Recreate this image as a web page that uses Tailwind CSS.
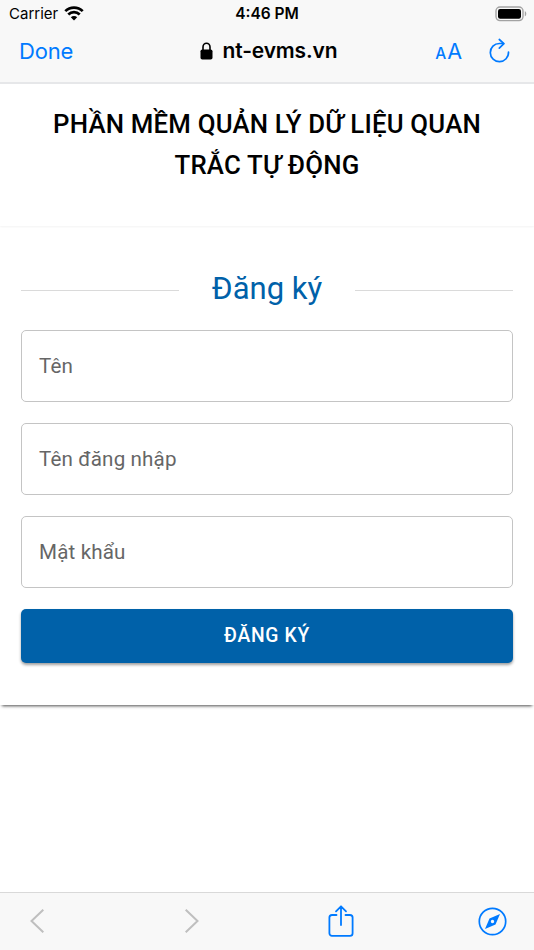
<!DOCTYPE html>
<html lang="vi">
<head>
<meta charset="utf-8">
<title>nt-evms.vn</title>
<script src="https://cdn.jsdelivr.net/npm/@tailwindcss/browser@4"></script>
</head>
<body class="bg-white">
<div class="w-[534px] h-[950px] flex flex-col overflow-hidden bg-white font-['Roboto',sans-serif] text-black">
  <header class="h-[84px] shrink-0 bg-[#f8f8f8] border-b-2 border-[#e6e7e9] font-['Inter',sans-serif]">
    <div class="h-[27px] grid grid-cols-3 items-center pl-[9px] pr-[7px]">
      <div class="flex items-center gap-[6px]">
        <span class="text-[15px] leading-[27px]">Carrier</span>
        <svg class="w-[20px] h-[15px] -mt-[1px]" viewBox="0 0 20 15" fill="none" stroke="#000" stroke-width="2.7">
          <path d="M1.3 5.1a12.4 12.4 0 0 1 17.4 0"/><path d="M4.3 8.5a8 8 0 0 1 11.4 0"/>
          <path d="M10 14.4L6.8 11.3a4.5 4.5 0 0 1 6.4 0z" fill="#000" stroke="none"/>
        </svg>
      </div>
      <span class="text-center text-[15.5px] leading-[27px] font-semibold whitespace-nowrap pr-[2px]">4:46 PM</span>
      <svg class="w-[32px] h-[16px] justify-self-end" viewBox="0 0 32 16">
        <rect x="1" y="1" width="27" height="13.6" rx="4" fill="none" stroke="#a3a3a3" stroke-width="1.4"/>
        <rect x="3" y="3" width="23" height="9.8" rx="2.2"/>
        <path d="M29.8 5.3c2 .6 2 4.4 0 5z" fill="#a3a3a3"/>
      </svg>
    </div>
    <div class="h-[48px] grid grid-cols-[1fr_auto_1fr] items-center pl-[19px] pr-[24px]">
      <span class="text-[22px] text-[#007aff] tracking-[-0.2px]">Done</span>
      <div class="flex items-center gap-[10px] pl-[8px]">
        <svg class="w-[13px] h-[18px]" viewBox="0 0 13 18"><rect x="0.5" y="7.5" width="12" height="10" rx="1.8"/><path d="M3 8V5a3.5 3.8 0 0 1 7 0v3" fill="none" stroke="#000" stroke-width="1.6"/></svg>
        <span class="text-[21px] font-semibold tracking-[-0.15px]">nt-evms.vn</span>
      </div>
      <div class="flex justify-end items-center gap-[27px] text-[#007aff]">
        <span class="flex items-baseline gap-[1px] leading-none pt-[1px]"><span class="text-[15.5px] font-medium">A</span><span class="text-[21.5px]">A</span></span>
        <svg class="w-[21px] h-[26px]" viewBox="0 0 21 26" fill="none" stroke="currentColor" stroke-width="1.7" stroke-linecap="round" stroke-linejoin="round"><path d="M19.5 14.2A9.1 9.1 0 1 1 10.4 5.5H14.5"/><path d="M10.3 1.5l4.6 4.1-4.6 4.5"/></svg>
      </div>
    </div>
  </header>
  <main class="flex-1 bg-white">
    <div class="h-[142px] pt-[20px] shadow-[0_1px_2px_rgba(0,0,0,0.05)]">
      <h1 class="text-center text-[25.8px] leading-[41.3px] font-medium tracking-[0.19px]">PHẦN MỀM QUẢN LÝ DỮ LIỆU QUAN<br>TRẮC TỰ ĐỘNG</h1>
    </div>
    <section class="h-[479px] px-[21px] pt-[38px] shadow-[0_3px_3px_-2px_rgba(0,0,0,0.7)]">
      <div class="h-[50px] flex items-center justify-between">
        <div class="w-[158px] h-px mt-[2px] bg-[#dadada]"></div>
        <h2 class="text-[31px] leading-[50px] text-[#0061a9]">Đăng ký</h2>
        <div class="w-[158px] h-px mt-[2px] bg-[#dadada]"></div>
      </div>
      <form class="mt-[16.4px] flex flex-col gap-[21px] text-[20.6px] text-[#666]">
        <div class="h-[72px] rounded-[5px] border border-[#c4c4c4] px-[17px] flex items-center tracking-[0.15px]">Tên</div>
        <div class="h-[72px] rounded-[5px] border border-[#c4c4c4] px-[17px] flex items-center tracking-[0.15px]">Tên đăng nhập</div>
        <div class="h-[72px] rounded-[5px] border border-[#c4c4c4] px-[17px] flex items-center tracking-[0.15px]">Mật khẩu</div>
        <button type="button" class="h-[54px] pt-[1px] rounded-[5px] bg-[#0061a9] text-white text-[19.3px] font-medium tracking-[0.7px] shadow-[0_2px_3px_rgba(0,0,0,0.38)]">ĐĂNG KÝ</button>
      </form>
    </section>
  </main>
  <footer class="h-[58px] shrink-0 bg-[#f8f8f8] border-t border-[#d9d9d9] flex items-center pl-[30px]">
    <svg class="w-[14px] h-[24px] -mt-[1px]" viewBox="0 0 14 24" fill="none" stroke="#bfbfbf" stroke-width="2"><path d="M13.3 0.7L1.5 12l11.8 11.3"/></svg>
    <svg class="w-[14px] h-[24px] ml-[141px] -mt-[1px]" viewBox="0 0 14 24" fill="none" stroke="#bfbfbf" stroke-width="2"><path d="M0.7 0.7L12.5 12L0.7 23.3"/></svg>
    <svg class="w-[26px] h-[32px] ml-[129px] -mt-[2px]" viewBox="0 0 26 32" fill="none" stroke="#007aff" stroke-width="1.8" stroke-linecap="round" stroke-linejoin="round"><path d="M8.5 10H4a2.6 2.6 0 0 0-2.6 2.6v15.6A2.6 2.6 0 0 0 4 30.8h18a2.6 2.6 0 0 0 2.6-2.6V12.6A2.6 2.6 0 0 0 22 10h-4.5M13 20V1.5M8 6.3l5-5 5 5"/></svg>
    <svg class="w-[29px] h-[29px] ml-[124px]" viewBox="0 0 29 29"><circle cx="14.5" cy="14.5" r="13.2" fill="none" stroke="#007aff" stroke-width="1.7"/><path fill="#007aff" fill-rule="evenodd" d="M22 7L17.500 17.500 7 22 11.500 11.500zM14.5 12.8a1.7 1.7 0 1 0 0 3.4 1.7 1.7 0 0 0 0-3.4z"/></svg>
  </footer>
</div>
</body>
</html>
